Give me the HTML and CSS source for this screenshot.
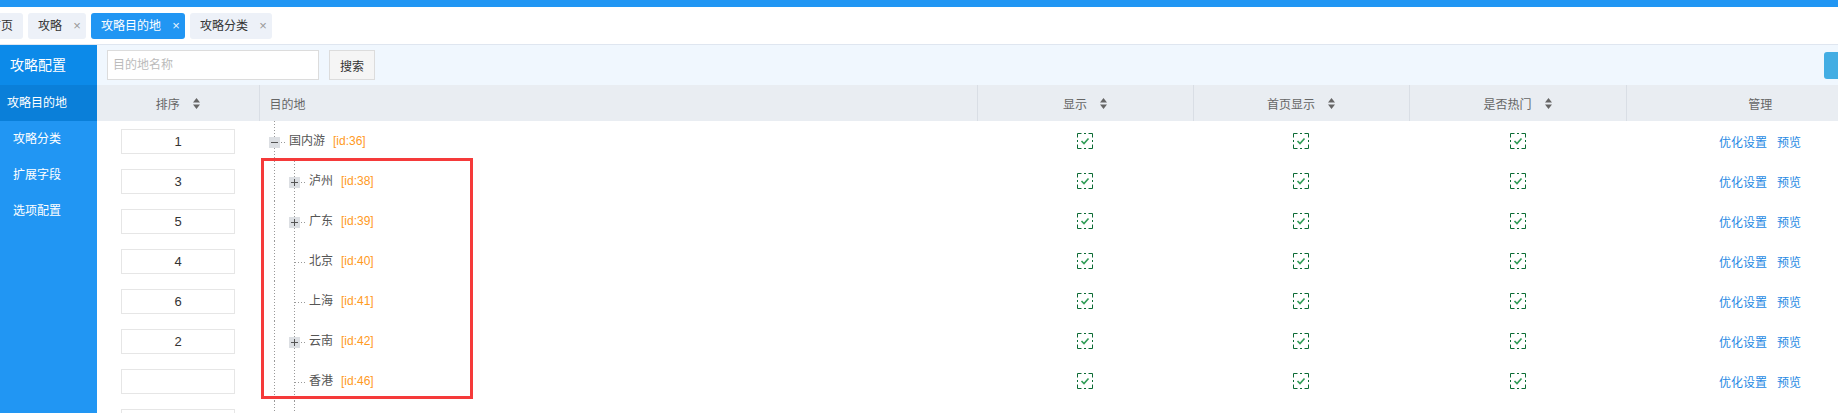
FILE: index.html
```html
<!DOCTYPE html>
<html lang="zh-CN">
<head>
<meta charset="utf-8">
<title>攻略目的地</title>
<link rel="stylesheet" href="styles.css">
</head>
<body>
<div class="topbar"></div>
<div class="tabbar">
  <div class="tab tab-home">首页</div>
  <div class="tab">攻略<span class="close">×</span></div>
  <div class="tab active">攻略目的地<span class="close">×</span></div>
  <div class="tab">攻略分类<span class="close">×</span></div>
</div>
<div class="layout">
  <aside class="sidebar">
    <div class="side-title">攻略配置</div>
    <div class="side-item active">攻略目的地</div>
    <div class="side-item">攻略分类</div>
    <div class="side-item">扩展字段</div>
    <div class="side-item">选项配置</div>
  </aside>
  <main class="content">
    <div class="toolbar">
      <input class="search-input" type="text" placeholder="目的地名称">
      <button class="btn">搜索</button>
      <button class="btn-primary"></button>
    </div>
    <table class="grid">
      <colgroup>
        <col class="c-sort"><col class="c-name"><col class="c-flag"><col class="c-flag"><col class="c-flag2"><col class="c-op">
      </colgroup>
      <thead>
        <tr>
          <th><span class="th-in">排序<svg class="sort" width="7" height="11" viewBox="0 0 7 11"><path d="M0 4.5L3.5 0L7 4.5Z M0 6.5L3.5 11L7 6.5Z" fill="#666"/></svg></span></th>
          <th class="th-left">目的地</th>
          <th><span class="th-in">显示<svg class="sort" width="7" height="11" viewBox="0 0 7 11"><path d="M0 4.5L3.5 0L7 4.5Z M0 6.5L3.5 11L7 6.5Z" fill="#666"/></svg></span></th>
          <th><span class="th-in">首页显示<svg class="sort" width="7" height="11" viewBox="0 0 7 11"><path d="M0 4.5L3.5 0L7 4.5Z M0 6.5L3.5 11L7 6.5Z" fill="#666"/></svg></span></th>
          <th><span class="th-in">是否热门<svg class="sort" width="7" height="11" viewBox="0 0 7 11"><path d="M0 4.5L3.5 0L7 4.5Z M0 6.5L3.5 11L7 6.5Z" fill="#666"/></svg></span></th>
          <th>管理</th>
        </tr>
      </thead>
      <tbody>
        <tr>
          <td class="td-c"><input class="sort-input" type="text" value="1"></td>
          <td><div class="tree-node"><span class="switch"><svg width="11" height="11" viewBox="0 0 11 11"><rect width="11" height="11" fill="#dcdfe3"/><path d="M2 5.5H9" stroke="#555" stroke-width="1"/></svg></span><span class="node-name">国内游</span><span class="node-id">[id:36]</span></div></td>
          <td class="td-c"><svg class="chk" width="16" height="16" viewBox="0 0 16 16"><path d="M0.5 0.5H15.5M15.5 0.5V15.5M15.5 15.5H0.5M0.5 15.5V0.5" fill="none" stroke="#0b6b34" stroke-dasharray="4 2.5 2 2.5 4"/><path d="M4.5 8L7 10.5L11.5 5.5" fill="none" stroke="#2e9c55" stroke-width="1.6"/></svg></td>
          <td class="td-c"><svg class="chk" width="16" height="16" viewBox="0 0 16 16"><path d="M0.5 0.5H15.5M15.5 0.5V15.5M15.5 15.5H0.5M0.5 15.5V0.5" fill="none" stroke="#0b6b34" stroke-dasharray="4 2.5 2 2.5 4"/><path d="M4.5 8L7 10.5L11.5 5.5" fill="none" stroke="#2e9c55" stroke-width="1.6"/></svg></td>
          <td class="td-c"><svg class="chk" width="16" height="16" viewBox="0 0 16 16"><path d="M0.5 0.5H15.5M15.5 0.5V15.5M15.5 15.5H0.5M0.5 15.5V0.5" fill="none" stroke="#0b6b34" stroke-dasharray="4 2.5 2 2.5 4"/><path d="M4.5 8L7 10.5L11.5 5.5" fill="none" stroke="#2e9c55" stroke-width="1.6"/></svg></td>
          <td class="td-c"><a class="link">优化设置</a><a class="link">预览</a></td>
        </tr>
        <tr>
          <td class="td-c"><input class="sort-input" type="text" value="3"></td>
          <td><div class="tree-node"><span class="indent"></span><span class="switch"><svg width="11" height="11" viewBox="0 0 11 11"><rect width="11" height="11" fill="#dcdfe3"/><path d="M2 5.5H9M5.5 2V9" stroke="#555" stroke-width="1"/></svg></span><span class="node-name">泸州</span><span class="node-id">[id:38]</span></div></td>
          <td class="td-c"><svg class="chk" width="16" height="16" viewBox="0 0 16 16"><path d="M0.5 0.5H15.5M15.5 0.5V15.5M15.5 15.5H0.5M0.5 15.5V0.5" fill="none" stroke="#0b6b34" stroke-dasharray="4 2.5 2 2.5 4"/><path d="M4.5 8L7 10.5L11.5 5.5" fill="none" stroke="#2e9c55" stroke-width="1.6"/></svg></td>
          <td class="td-c"><svg class="chk" width="16" height="16" viewBox="0 0 16 16"><path d="M0.5 0.5H15.5M15.5 0.5V15.5M15.5 15.5H0.5M0.5 15.5V0.5" fill="none" stroke="#0b6b34" stroke-dasharray="4 2.5 2 2.5 4"/><path d="M4.5 8L7 10.5L11.5 5.5" fill="none" stroke="#2e9c55" stroke-width="1.6"/></svg></td>
          <td class="td-c"><svg class="chk" width="16" height="16" viewBox="0 0 16 16"><path d="M0.5 0.5H15.5M15.5 0.5V15.5M15.5 15.5H0.5M0.5 15.5V0.5" fill="none" stroke="#0b6b34" stroke-dasharray="4 2.5 2 2.5 4"/><path d="M4.5 8L7 10.5L11.5 5.5" fill="none" stroke="#2e9c55" stroke-width="1.6"/></svg></td>
          <td class="td-c"><a class="link">优化设置</a><a class="link">预览</a></td>
        </tr>
        <tr>
          <td class="td-c"><input class="sort-input" type="text" value="5"></td>
          <td><div class="tree-node"><span class="indent"></span><span class="switch"><svg width="11" height="11" viewBox="0 0 11 11"><rect width="11" height="11" fill="#dcdfe3"/><path d="M2 5.5H9M5.5 2V9" stroke="#555" stroke-width="1"/></svg></span><span class="node-name">广东</span><span class="node-id">[id:39]</span></div></td>
          <td class="td-c"><svg class="chk" width="16" height="16" viewBox="0 0 16 16"><path d="M0.5 0.5H15.5M15.5 0.5V15.5M15.5 15.5H0.5M0.5 15.5V0.5" fill="none" stroke="#0b6b34" stroke-dasharray="4 2.5 2 2.5 4"/><path d="M4.5 8L7 10.5L11.5 5.5" fill="none" stroke="#2e9c55" stroke-width="1.6"/></svg></td>
          <td class="td-c"><svg class="chk" width="16" height="16" viewBox="0 0 16 16"><path d="M0.5 0.5H15.5M15.5 0.5V15.5M15.5 15.5H0.5M0.5 15.5V0.5" fill="none" stroke="#0b6b34" stroke-dasharray="4 2.5 2 2.5 4"/><path d="M4.5 8L7 10.5L11.5 5.5" fill="none" stroke="#2e9c55" stroke-width="1.6"/></svg></td>
          <td class="td-c"><svg class="chk" width="16" height="16" viewBox="0 0 16 16"><path d="M0.5 0.5H15.5M15.5 0.5V15.5M15.5 15.5H0.5M0.5 15.5V0.5" fill="none" stroke="#0b6b34" stroke-dasharray="4 2.5 2 2.5 4"/><path d="M4.5 8L7 10.5L11.5 5.5" fill="none" stroke="#2e9c55" stroke-width="1.6"/></svg></td>
          <td class="td-c"><a class="link">优化设置</a><a class="link">预览</a></td>
        </tr>
        <tr>
          <td class="td-c"><input class="sort-input" type="text" value="4"></td>
          <td><div class="tree-node"><span class="indent"></span><span class="switch leaf"></span><span class="node-name">北京</span><span class="node-id">[id:40]</span></div></td>
          <td class="td-c"><svg class="chk" width="16" height="16" viewBox="0 0 16 16"><path d="M0.5 0.5H15.5M15.5 0.5V15.5M15.5 15.5H0.5M0.5 15.5V0.5" fill="none" stroke="#0b6b34" stroke-dasharray="4 2.5 2 2.5 4"/><path d="M4.5 8L7 10.5L11.5 5.5" fill="none" stroke="#2e9c55" stroke-width="1.6"/></svg></td>
          <td class="td-c"><svg class="chk" width="16" height="16" viewBox="0 0 16 16"><path d="M0.5 0.5H15.5M15.5 0.5V15.5M15.5 15.5H0.5M0.5 15.5V0.5" fill="none" stroke="#0b6b34" stroke-dasharray="4 2.5 2 2.5 4"/><path d="M4.5 8L7 10.5L11.5 5.5" fill="none" stroke="#2e9c55" stroke-width="1.6"/></svg></td>
          <td class="td-c"><svg class="chk" width="16" height="16" viewBox="0 0 16 16"><path d="M0.5 0.5H15.5M15.5 0.5V15.5M15.5 15.5H0.5M0.5 15.5V0.5" fill="none" stroke="#0b6b34" stroke-dasharray="4 2.5 2 2.5 4"/><path d="M4.5 8L7 10.5L11.5 5.5" fill="none" stroke="#2e9c55" stroke-width="1.6"/></svg></td>
          <td class="td-c"><a class="link">优化设置</a><a class="link">预览</a></td>
        </tr>
        <tr>
          <td class="td-c"><input class="sort-input" type="text" value="6"></td>
          <td><div class="tree-node"><span class="indent"></span><span class="switch leaf"></span><span class="node-name">上海</span><span class="node-id">[id:41]</span></div></td>
          <td class="td-c"><svg class="chk" width="16" height="16" viewBox="0 0 16 16"><path d="M0.5 0.5H15.5M15.5 0.5V15.5M15.5 15.5H0.5M0.5 15.5V0.5" fill="none" stroke="#0b6b34" stroke-dasharray="4 2.5 2 2.5 4"/><path d="M4.5 8L7 10.5L11.5 5.5" fill="none" stroke="#2e9c55" stroke-width="1.6"/></svg></td>
          <td class="td-c"><svg class="chk" width="16" height="16" viewBox="0 0 16 16"><path d="M0.5 0.5H15.5M15.5 0.5V15.5M15.5 15.5H0.5M0.5 15.5V0.5" fill="none" stroke="#0b6b34" stroke-dasharray="4 2.5 2 2.5 4"/><path d="M4.5 8L7 10.5L11.5 5.5" fill="none" stroke="#2e9c55" stroke-width="1.6"/></svg></td>
          <td class="td-c"><svg class="chk" width="16" height="16" viewBox="0 0 16 16"><path d="M0.5 0.5H15.5M15.5 0.5V15.5M15.5 15.5H0.5M0.5 15.5V0.5" fill="none" stroke="#0b6b34" stroke-dasharray="4 2.5 2 2.5 4"/><path d="M4.5 8L7 10.5L11.5 5.5" fill="none" stroke="#2e9c55" stroke-width="1.6"/></svg></td>
          <td class="td-c"><a class="link">优化设置</a><a class="link">预览</a></td>
        </tr>
        <tr>
          <td class="td-c"><input class="sort-input" type="text" value="2"></td>
          <td><div class="tree-node"><span class="indent"></span><span class="switch"><svg width="11" height="11" viewBox="0 0 11 11"><rect width="11" height="11" fill="#dcdfe3"/><path d="M2 5.5H9M5.5 2V9" stroke="#555" stroke-width="1"/></svg></span><span class="node-name">云南</span><span class="node-id">[id:42]</span></div></td>
          <td class="td-c"><svg class="chk" width="16" height="16" viewBox="0 0 16 16"><path d="M0.5 0.5H15.5M15.5 0.5V15.5M15.5 15.5H0.5M0.5 15.5V0.5" fill="none" stroke="#0b6b34" stroke-dasharray="4 2.5 2 2.5 4"/><path d="M4.5 8L7 10.5L11.5 5.5" fill="none" stroke="#2e9c55" stroke-width="1.6"/></svg></td>
          <td class="td-c"><svg class="chk" width="16" height="16" viewBox="0 0 16 16"><path d="M0.5 0.5H15.5M15.5 0.5V15.5M15.5 15.5H0.5M0.5 15.5V0.5" fill="none" stroke="#0b6b34" stroke-dasharray="4 2.5 2 2.5 4"/><path d="M4.5 8L7 10.5L11.5 5.5" fill="none" stroke="#2e9c55" stroke-width="1.6"/></svg></td>
          <td class="td-c"><svg class="chk" width="16" height="16" viewBox="0 0 16 16"><path d="M0.5 0.5H15.5M15.5 0.5V15.5M15.5 15.5H0.5M0.5 15.5V0.5" fill="none" stroke="#0b6b34" stroke-dasharray="4 2.5 2 2.5 4"/><path d="M4.5 8L7 10.5L11.5 5.5" fill="none" stroke="#2e9c55" stroke-width="1.6"/></svg></td>
          <td class="td-c"><a class="link">优化设置</a><a class="link">预览</a></td>
        </tr>
        <tr>
          <td class="td-c"><input class="sort-input" type="text" value=""></td>
          <td><div class="tree-node"><span class="indent"></span><span class="switch leaf"></span><span class="node-name">香港</span><span class="node-id">[id:46]</span></div></td>
          <td class="td-c"><svg class="chk" width="16" height="16" viewBox="0 0 16 16"><path d="M0.5 0.5H15.5M15.5 0.5V15.5M15.5 15.5H0.5M0.5 15.5V0.5" fill="none" stroke="#0b6b34" stroke-dasharray="4 2.5 2 2.5 4"/><path d="M4.5 8L7 10.5L11.5 5.5" fill="none" stroke="#2e9c55" stroke-width="1.6"/></svg></td>
          <td class="td-c"><svg class="chk" width="16" height="16" viewBox="0 0 16 16"><path d="M0.5 0.5H15.5M15.5 0.5V15.5M15.5 15.5H0.5M0.5 15.5V0.5" fill="none" stroke="#0b6b34" stroke-dasharray="4 2.5 2 2.5 4"/><path d="M4.5 8L7 10.5L11.5 5.5" fill="none" stroke="#2e9c55" stroke-width="1.6"/></svg></td>
          <td class="td-c"><svg class="chk" width="16" height="16" viewBox="0 0 16 16"><path d="M0.5 0.5H15.5M15.5 0.5V15.5M15.5 15.5H0.5M0.5 15.5V0.5" fill="none" stroke="#0b6b34" stroke-dasharray="4 2.5 2 2.5 4"/><path d="M4.5 8L7 10.5L11.5 5.5" fill="none" stroke="#2e9c55" stroke-width="1.6"/></svg></td>
          <td class="td-c"><a class="link">优化设置</a><a class="link">预览</a></td>
        </tr>
        <tr>
          <td class="td-c"><input class="sort-input" type="text" value=""></td>
          <td><div class="tree-node"><span class="indent"></span><span class="switch leaf"></span></div></td>
          <td></td><td></td><td></td><td></td>
        </tr>
      </tbody>
    </table>
    <div class="highlight"></div>
  </main>
</div>
</body>
</html>
```

FILE: styles.css
```css
html, body {
  margin: 0;
  padding: 0;
}
body {
  width: 1838px;
  height: 413px;
  overflow: hidden;
  background: #fff;
  font-family: "Liberation Sans", "Noto Sans CJK SC", sans-serif;
  font-size: 12px;
  color: #333;
}

.topbar {
  height: 7px;
  background: #2196f3;
}

.tabbar {
  box-sizing: border-box;
  height: 38px;
  padding-top: 6px;
  border-bottom: 1px solid #dfe6f0;
  display: flex;
  align-items: flex-start;
  gap: 5px;
  overflow: hidden;
}
.tab {
  flex: none;
  height: 26px;
  line-height: 26px;
  padding: 0 4px 0 10px;
  background: #edf1f8;
  border-radius: 3px;
  color: #333;
  display: flex;
  align-items: center;
  white-space: nowrap;
}
.tab-home {
  margin-left: -21px;
  padding-right: 10px;
}
.tab.active {
  background: #2196f3;
  color: #fff;
}
.close {
  width: 10px;
  margin-left: 10px;
  text-align: center;
  font-size: 13px;
  color: #999;
}
.tab.active .close {
  color: #e6f2fe;
}

.layout {
  display: flex;
  height: 368px;
}

.sidebar {
  flex: none;
  width: 97px;
  background: #2196f3;
  color: #fff;
}
.side-title {
  height: 40px;
  line-height: 40px;
  padding-left: 10px;
  font-size: 14px;
  background: #0c8ae9;
}
.side-item {
  height: 36px;
  line-height: 36px;
  padding-left: 13px;
  font-size: 12px;
  white-space: nowrap;
}
.side-item.active {
  background: #0a7fd9;
  padding-left: 7px;
}

.content {
  flex: none;
  width: 1797px;
  position: relative;
}

.toolbar {
  height: 40px;
  background: #f0f7fe;
  display: flex;
  align-items: center;
  padding-left: 10px;
  gap: 10px;
}
.search-input {
  box-sizing: border-box;
  width: 212px;
  height: 30px;
  border: 1px solid #dcdcdc;
  background: #fff;
  padding: 0 5px;
  font-family: "Liberation Sans", "Noto Sans CJK SC", sans-serif;
  font-size: 12px;
  color: #333;
  outline: none;
}
.search-input::placeholder {
  color: #bbb;
}
.btn {
  box-sizing: border-box;
  width: 46px;
  height: 30px;
  border: 1px solid #dcdcdc;
  background: #f5f5f5;
  font-family: "Liberation Sans", "Noto Sans CJK SC", sans-serif;
  font-size: 12px;
  color: #333;
  padding: 0;
}
.btn-primary {
  margin-left: auto;
  margin-right: 10px;
  width: 60px;
  height: 27px;
  border: none;
  border-radius: 3px;
  background: #43ade3;
}

.grid {
  width: 1797px;
  table-layout: fixed;
  border-collapse: collapse;
  border-spacing: 0;
}
.c-sort { width: 162px; }
.c-name { width: 718px; }
.c-flag { width: 216px; }
.c-flag2 { width: 217px; }
.c-op { width: 268px; }

.grid th {
  height: 36px;
  padding: 0;
  background: #e9edf2;
  color: #666;
  font-weight: normal;
  font-size: 12px;
  text-align: center;
  border-left: 1px solid #d9dee5;
}
.grid th:first-child {
  border-left: none;
}
.grid th.th-left {
  text-align: left;
  padding-left: 10px;
}
.th-in {
  display: inline-flex;
  align-items: center;
  gap: 13px;
}
.sort {
  display: block;
}

.grid td {
  height: 40px;
  padding: 0;
  vertical-align: top;
}
.grid td.td-c {
  text-align: center;
  vertical-align: middle;
}
.sort-input {
  box-sizing: border-box;
  width: 114px;
  height: 25px;
  border: 1px solid #e6e6e6;
  text-align: center;
  font-family: "Liberation Sans", sans-serif;
  font-size: 13px;
  color: #333;
  outline: none;
  display: block;
  margin: 0 auto;
}
.chk {
  display: block;
  margin: 0 auto;
}
.link {
  color: #1f8ae4;
  cursor: pointer;
}
.link + .link {
  margin-left: 10px;
}

.tree-node {
  height: 40px;
  display: flex;
  align-items: flex-start;
  padding-left: 5px;
}
.indent,
.switch {
  flex: none;
  height: 40px;
  background-repeat: no-repeat;
}
.indent {
  width: 20px;
  background-image: repeating-linear-gradient(to bottom, #999 0 1px, transparent 1px 3px);
  background-size: 1px 100%;
  background-position: 10px 0;
}
.switch {
  width: 22px;
  background-image:
    repeating-linear-gradient(to bottom, #999 0 1px, transparent 1px 3px),
    repeating-linear-gradient(to right, #999 0 1px, transparent 1px 3px);
  background-size: 1px 100%, 11px 1px;
  background-position: 10px 0, 11px 21px;
}
.switch svg {
  display: block;
  margin: 16px 0 0 5px;
}
.node-name {
  margin-left: 3px;
  line-height: 40px;
  color: #555;
}
.node-id {
  margin-left: 8px;
  line-height: 40px;
  color: #ff9a1e;
}

.highlight {
  position: absolute;
  left: 164px;
  top: 113px;
  width: 212px;
  height: 241px;
  box-sizing: border-box;
  border: 3px solid #f53a3a;
  pointer-events: none;
}
```
